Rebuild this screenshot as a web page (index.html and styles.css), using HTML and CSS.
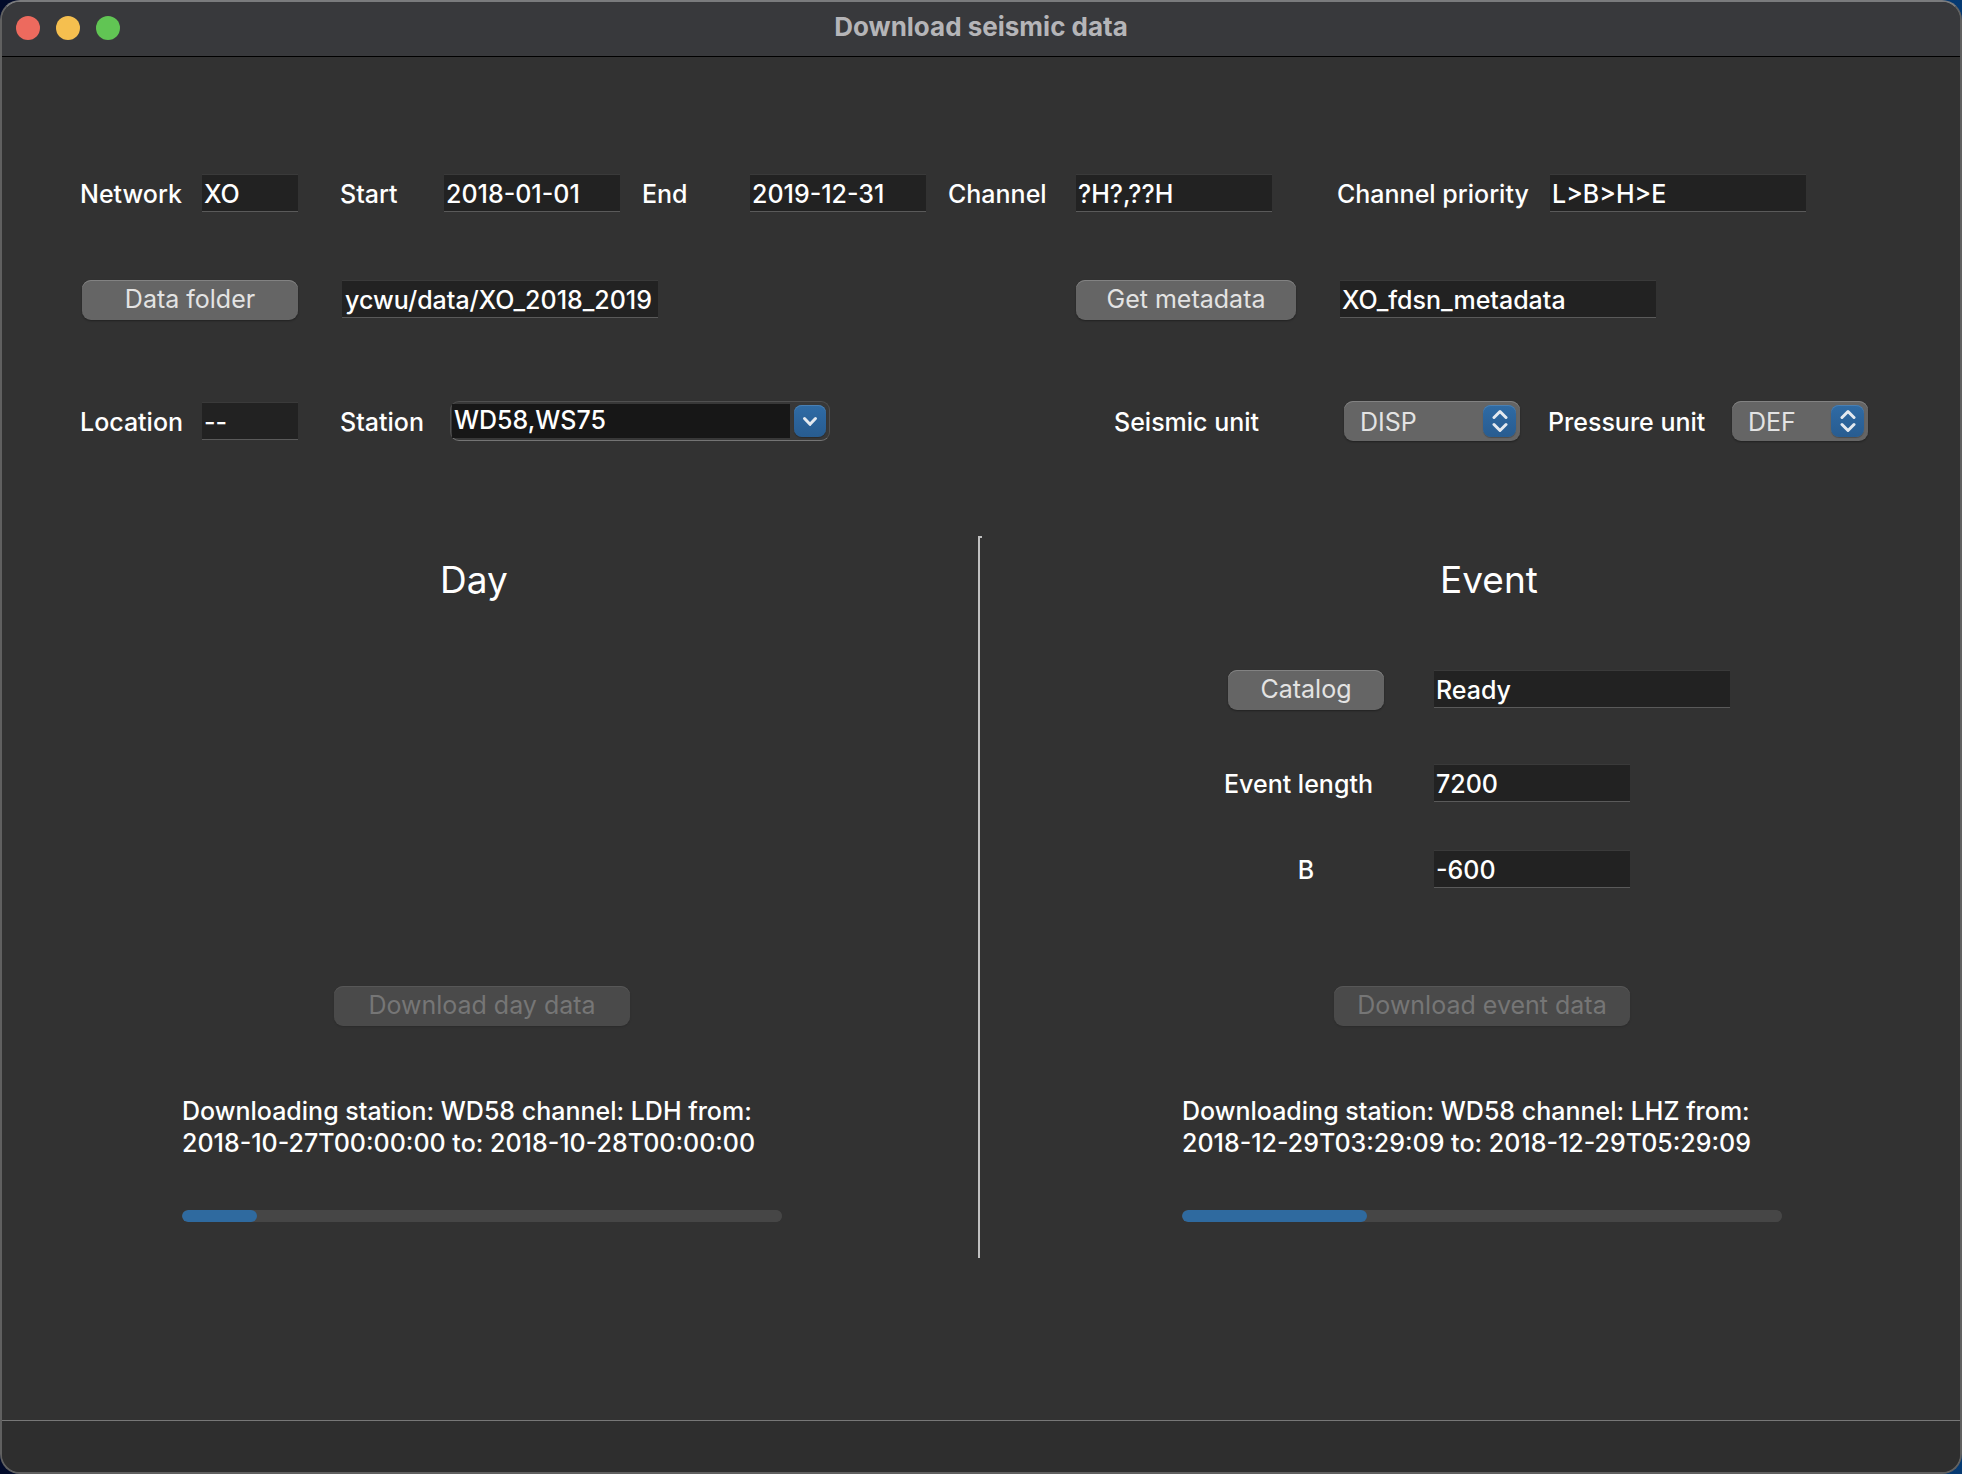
FILE: index.html
```html
<!DOCTYPE html>
<html lang="en">
<head>
<meta charset="utf-8">
<title>Download seismic data</title>
<link rel="stylesheet" href="styles.css">
</head>
<body>
<div class="window">
  <header class="titlebar">
    <div class="lights">
      <button class="light close" type="button" aria-label="Close"></button>
      <button class="light minimize" type="button" aria-label="Minimize"></button>
      <button class="light zoom" type="button" aria-label="Zoom"></button>
    </div>
    <h1 class="title">Download seismic data</h1>
  </header>

  <main class="content">
    <div class="row row-query">
      <label for="network">Network</label>
      <input class="field" id="network" type="text" value="XO">
      <label for="start">Start</label>
      <input class="field" id="start" type="text" value="2018-01-01">
      <label for="end">End</label>
      <input class="field" id="end" type="text" value="2019-12-31">
      <label for="channel">Channel</label>
      <input class="field" id="channel" type="text" value="?H?,??H">
      <label for="priority">Channel priority</label>
      <input class="field" id="priority" type="text" value="L&gt;B&gt;H&gt;E">
    </div>

    <div class="row row-files">
      <button class="button" type="button">Data folder</button>
      <input class="field field-path" type="text" aria-label="Data folder path" value="ycwu/data/XO_2018_2019">
      <button class="button" type="button">Get metadata</button>
      <input class="field" type="text" aria-label="Metadata file" value="XO_fdsn_metadata">
    </div>

    <div class="row row-units">
      <label for="location">Location</label>
      <input class="field" id="location" type="text" value="--">
      <label for="station">Station</label>
      <div class="combo">
        <input class="combo-input" id="station" type="text" value="WD58,WS75">
        <button class="combo-button" type="button" aria-label="Show stations">
          <svg width="16" height="11" viewBox="0 0 16 11" aria-hidden="true"><path d="M2.500 2.500 8 8.300 13.500 2.500"/></svg>
        </button>
      </div>
      <label for="seismic">Seismic unit</label>
      <div class="popup">
        <select id="seismic"><option>DISP</option><option>VEL</option><option>ACC</option></select>
        <span class="popup-cap"><svg width="16" height="24" viewBox="0 0 16 24" aria-hidden="true"><path d="M2 8.500 8 2.500 14 8.500M2 15.500 8 21.500 14 15.500"/></svg></span>
      </div>
      <label for="pressure">Pressure unit</label>
      <div class="popup">
        <select id="pressure"><option>DEF</option><option>PA</option></select>
        <span class="popup-cap"><svg width="16" height="24" viewBox="0 0 16 24" aria-hidden="true"><path d="M2 8.500 8 2.500 14 8.500M2 15.500 8 21.500 14 15.500"/></svg></span>
      </div>
    </div>

    <div class="panels">
      <section class="panel panel-day">
        <h2 class="panel-title">Day</h2>
        <div class="panel-footer">
          <button class="button download" type="button" disabled>Download day data</button>
          <p class="status">Downloading station: WD58 channel: LDH from:<br>2018-10-27T00:00:00 to: 2018-10-28T00:00:00</p>
          <progress class="progress" max="1000" value="125" aria-label="Day download"></progress>
        </div>
      </section>
      <div class="divider"></div>
      <section class="panel panel-event">
        <h2 class="panel-title">Event</h2>
        <div class="event-form">
          <button class="button" type="button">Catalog</button>
          <input class="field wide" type="text" aria-label="Catalog status" value="Ready">
        </div>
        <div class="event-form">
          <label for="length">Event length</label>
          <input class="field" id="length" type="text" value="7200">
        </div>
        <div class="event-form">
          <label class="centered" for="before">B</label>
          <input class="field" id="before" type="text" value="-600">
        </div>
        <div class="panel-footer">
          <button class="button download" type="button" disabled>Download event data</button>
          <p class="status">Downloading station: WD58 channel: LHZ from:<br>2018-12-29T03:29:09 to: 2018-12-29T05:29:09</p>
          <progress class="progress" max="1000" value="308" aria-label="Event download"></progress>
        </div>
      </section>
    </div>
  </main>

  <footer class="statusbar"></footer>
</div>
</body>
</html>
```
FILE: styles.css
```css
* {
  box-sizing: border-box;
}

body {
  margin: 0;
  background: linear-gradient(90deg, #020b2a, #063a72);
  color: #fff;
  font: 500 25px/32px Inter, "Liberation Sans", sans-serif;
}

button,
input,
select {
  margin: 0;
  border: 0;
  font: inherit;
  color: inherit;
}

.window {
  display: flex;
  flex-direction: column;
  min-height: 100vh;
  border: 2px solid #606060;
  border-top-color: #7a7b7d;
  border-radius: 20px;
  background: #323232;
  overflow: hidden;
}

/* Title bar */
.titlebar {
  display: grid;
  grid-template-columns: 1fr auto 1fr;
  align-items: center;
  height: 55px;
  padding: 0 14px 2px;
  border-bottom: 1px solid #000;
  background: #38393c;
}

.lights {
  display: flex;
  gap: 16px;
}

.light {
  width: 24px;
  height: 24px;
  padding: 0;
  border-radius: 50%;
}

.close { background: #ed6a5e; }
.minimize { background: #f5bf4f; }
.zoom { background: #61c554; }

.title {
  margin: 0;
  padding-bottom: 2px;
  font-size: 26px;
  font-weight: 700;
  line-height: 32px;
  color: #b5b5b8;
}

/* Form rows: column shares keep the fields in proportion to the window */
.content {
  flex: 1;
  padding-top: 116px;
}

.row {
  display: grid;
  grid-template-rows: 40px;
  align-items: center;
}

.row label,
.event-form label {
  padding-top: 2px;
  white-space: nowrap;
}

.row-query {
  grid-template-columns:
    minmax(0, 78fr) minmax(0, 122fr) minmax(0, 96fr)
    minmax(0, 42fr) minmax(0, 104fr) minmax(0, 176fr)
    minmax(0, 22fr) minmax(0, 108fr) minmax(0, 176fr)
    minmax(0, 22fr) minmax(0, 128fr) minmax(0, 196fr)
    minmax(0, 65fr) minmax(0, 213fr) minmax(0, 256fr) minmax(0, 154fr);
}

.row-query > :nth-child(1) { grid-column: 2; }
.row-query > :nth-child(3) { grid-column: 5; }
.row-query > :nth-child(5) { grid-column: 8; }
.row-query > :nth-child(7) { grid-column: 11; }
.row-query > :nth-child(9) { grid-column: 14; }

.row-files {
  margin-top: 67px;
  grid-template-columns:
    minmax(0, 80fr) minmax(0, 216fr) minmax(0, 44fr) minmax(0, 316fr)
    minmax(0, 418fr) minmax(0, 220fr) minmax(0, 44fr) minmax(0, 316fr) minmax(0, 304fr);
}

.row-files > :nth-child(1) { grid-column: 2; }
.row-files > :nth-child(2) { grid-column: 4; }
.row-files > :nth-child(3) { grid-column: 6; }
.row-files > :nth-child(4) { grid-column: 8; }

.row-units {
  margin-top: 81px;
  grid-template-columns:
    minmax(0, 78fr) minmax(0, 122fr) minmax(0, 96fr)
    minmax(0, 42fr) minmax(0, 110fr) minmax(0, 380fr)
    minmax(0, 284fr) minmax(0, 230fr) minmax(0, 176fr)
    minmax(0, 28fr) minmax(0, 184fr) minmax(0, 136fr) minmax(0, 92fr);
}

.row-units > :nth-child(1) { grid-column: 2; }
.row-units > :nth-child(3) { grid-column: 5; }
.row-units > :nth-child(5) { grid-column: 8; }
.row-units > :nth-child(7) { grid-column: 11; }

/* Controls */
.field {
  width: 100%;
  min-width: 0;
  height: 38px;
  padding: 1px 2px 0;
  border-bottom: 1px solid #5a5a5a;
  border-top: 1px solid #3a3a3a;
  background: #222;
  outline: 0;
}

.field-path {
  padding: 1px 6px 0 0;
  text-align: right;
}

.row-files .field,
.event-form .field {
  align-self: start;
}

.button {
  height: 40px;
  padding: 0 0 3px;
  border-radius: 9px;
  background: #656565;
  box-shadow: inset 0 1px #828282, 0 1px 2px rgba(0, 0, 0, 0.35);
  color: #e3e3e3;
  font-weight: 400;
  white-space: nowrap;
}

.button:disabled {
  background: #4a4a4a;
  box-shadow: inset 0 1px #575757, 0 1px 2px rgba(0, 0, 0, 0.15);
  color: #767676;
}

.combo {
  display: flex;
  align-items: center;
  height: 40px;
  padding: 1px 3px 1px 1px;
  border: 1px solid #505050;
  border-bottom-color: #747474;
  border-radius: 9px;
  background: #383838;
}

.combo-input {
  flex: 1;
  min-width: 0;
  height: 34px;
  margin-right: 4px;
  padding: 0 2px 2px;
  background: #171717;
  outline: 0;
}

.combo-button,
.popup-cap {
  display: grid;
  place-items: center;
  height: 32px;
  padding: 0;
  border-radius: 8px;
  background: linear-gradient(#2f6ba5, #285c90);
  box-shadow: inset 0 1px #4a80b3, 0 1px 1px rgba(0, 0, 0, 0.25);
}

.combo-button {
  width: 32px;
}

.combo-button svg,
.popup-cap svg {
  fill: none;
  stroke: #e4e9ef;
  stroke-width: 3;
  stroke-linecap: round;
  stroke-linejoin: round;
}

.popup {
  display: grid;
  grid-template-columns: 1fr 33px 4px;
  align-items: center;
}

.popup select {
  grid-area: 1 / 1 / 2 / 4;
  height: 40px;
  padding: 1px 40px 0 16px;
  border-radius: 9px;
  background: #656565;
  box-shadow: inset 0 1px #828282, 0 1px 2px rgba(0, 0, 0, 0.35);
  color: #e3e3e3;
  font-weight: 400;
  appearance: none;
}

.popup-cap {
  grid-area: 1 / 2;
  pointer-events: none;
}

/* Day and event panels */
.panels {
  display: grid;
  grid-template-columns:
    minmax(0, 180fr) minmax(0, 600fr) minmax(0, 196fr) 4px
    minmax(0, 200fr) minmax(0, 600fr) minmax(0, 178fr);
  min-height: 722px;
  margin-top: 95px;
}

.panel {
  display: flex;
  flex-direction: column;
  padding: 20px 0 36px;
}

.panel-day { grid-column: 2; }
.panel-event { grid-column: 6; }

.divider {
  grid-column: 4;
  border-top: 2px solid #c0c0c0;
  background: linear-gradient(90deg, #c0c0c0 2px, transparent 2px);
}

.panel-title {
  margin: 0 0 66px;
  padding-left: 43%;
  font-size: 37px;
  font-weight: 400;
  line-height: 48px;
}

.event-form {
  display: grid;
  grid-template-columns:
    minmax(0, 160fr) minmax(0, 50fr) minmax(0, 196fr) minmax(0, 100fr);
  align-items: center;
  height: 40px;
  margin: 0 52px 46px 42px;
}

.event-form:nth-of-type(1) {
  margin-bottom: 54px;
}

.event-form label {
  padding: 0;
}

.event-form .button {
  margin-left: 4px;
}

.event-form .field {
  grid-column: 3;
}

.event-form .wide {
  grid-column: 3 / 5;
}

.event-form .centered {
  padding-left: 4px;
  text-align: center;
}

.panel-footer {
  display: grid;
  grid-template-columns: minmax(0, 152fr) minmax(0, 296fr) minmax(0, 152fr);
  margin-top: auto;
}

.download {
  grid-column: 2;
}

.status,
.progress {
  grid-column: 1 / -1;
}

.status {
  margin: 69px 0 51px;
  white-space: nowrap;
}

.progress {
  display: block;
  width: 100%;
  height: 12px;
  border: 0;
  border-radius: 6px;
  background: #464646;
  overflow: hidden;
  appearance: none;
}

.progress::-webkit-progress-bar {
  background: #464646;
  border-radius: 6px;
}

.progress::-webkit-progress-value {
  background: #2f6a9f;
  border-radius: 6px;
}

.statusbar {
  height: 52px;
  border-top: 1px solid #777;
  background: #2e2e2e;
}
```
